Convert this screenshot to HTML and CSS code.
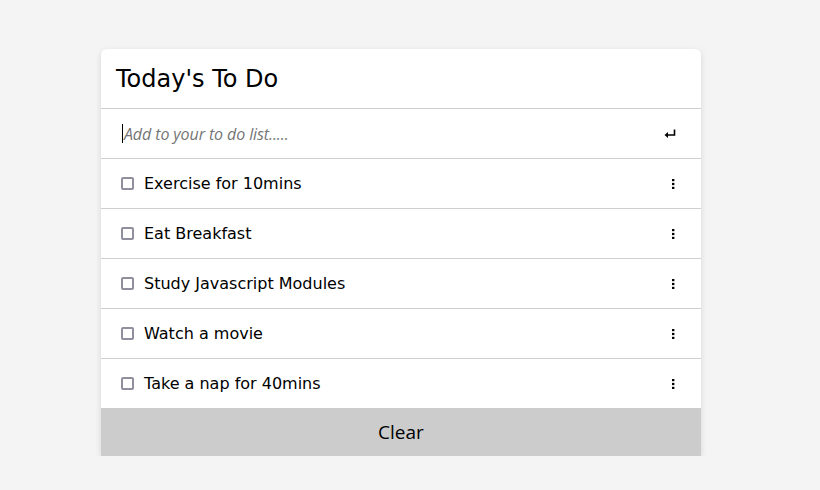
FILE: index.html
```html
<!DOCTYPE html>
<html>
<head>
<meta charset="utf-8">
<link rel="stylesheet" href="styles.css">
</head>
<body>
<div class="card">
  <div class="title">Today's To Do</div>
  <div class="row input-row">
    <span class="caret"></span><span class="placeholder">Add to your to do list.....</span>
    <svg class="enter" width="12" height="10" viewBox="0 0 12 10"><path d="M10.5 0.5V6H2" fill="none" stroke="#000" stroke-width="1.6"/><path d="M0.5 6L4 3V9Z" fill="#000"/></svg>
  </div>
  <div class="row item"><span class="box"></span><span class="text">Exercise for 10mins</span><svg class="kebab" width="3" height="10" viewBox="0 0 3 10"><rect x="0" y="0" width="2.4" height="2.2"/><rect x="0" y="3.9" width="2.4" height="2.2"/><rect x="0" y="7.8" width="2.4" height="2.2"/></svg></div>
  <div class="row item"><span class="box"></span><span class="text">Eat Breakfast</span><svg class="kebab" width="3" height="10" viewBox="0 0 3 10"><rect x="0" y="0" width="2.4" height="2.2"/><rect x="0" y="3.9" width="2.4" height="2.2"/><rect x="0" y="7.8" width="2.4" height="2.2"/></svg></div>
  <div class="row item"><span class="box"></span><span class="text">Study Javascript Modules</span><svg class="kebab" width="3" height="10" viewBox="0 0 3 10"><rect x="0" y="0" width="2.4" height="2.2"/><rect x="0" y="3.9" width="2.4" height="2.2"/><rect x="0" y="7.8" width="2.4" height="2.2"/></svg></div>
  <div class="row item"><span class="box"></span><span class="text">Watch a movie</span><svg class="kebab" width="3" height="10" viewBox="0 0 3 10"><rect x="0" y="0" width="2.4" height="2.2"/><rect x="0" y="3.9" width="2.4" height="2.2"/><rect x="0" y="7.8" width="2.4" height="2.2"/></svg></div>
  <div class="row item last"><span class="box"></span><span class="text">Take a nap for 40mins</span><svg class="kebab" width="3" height="10" viewBox="0 0 3 10"><rect x="0" y="0" width="2.4" height="2.2"/><rect x="0" y="3.9" width="2.4" height="2.2"/><rect x="0" y="7.8" width="2.4" height="2.2"/></svg></div>
  <div class="clear">Clear</div>
</div>
</body>
</html>
```

FILE: styles.css
```css
html, body { margin: 0; padding: 0; }
body { background: #f4f4f4; font-family: "DejaVu Sans", sans-serif; }
.card {
  width: 600px;
  margin: 49px 0 0 101px;
  background: #fff;
  border-radius: 6px 6px 0 0;
  box-shadow: 0 2px 6px rgba(0,0,0,0.12);
}
.title {
  height: 59px;
  display: flex;
  align-items: center;
  padding-left: 15px;
  font-size: 24px;
  color: #000;
  border-bottom: 1px solid #cfcfcf;
}
.row {
  height: 49px;
  display: flex;
  align-items: center;
  border-bottom: 1px solid #cfcfcf;
  padding: 0 26px 0 20px;
}
.row.last { border-bottom: none; }
.input-row { padding-left: 21px; padding-right: 25px; }
.caret { width: 1px; height: 19px; background: #000; }
.placeholder {
  flex: 1;
  font-family: "Open Sans", sans-serif;
  font-style: italic;
  font-size: 16px;
  color: #757575;
  margin-left: 1px;
  letter-spacing: -0.1px;
}
.enter { display: block; }
.box {
  box-sizing: border-box;
  width: 13px; height: 13px;
  border: 2px solid #8f8f9d;
  border-radius: 2px;
  flex: none;
}
.text { flex: 1; margin-left: 10px; font-size: 16px; color: #000; }
.kebab { display: block; fill: #000; }
.clear {
  height: 48px;
  background: #cccccc;
  display: flex;
  align-items: center;
  justify-content: center;
  font-family: "Open Sans", sans-serif;
  font-size: 19px;
  color: #000;
}
```
